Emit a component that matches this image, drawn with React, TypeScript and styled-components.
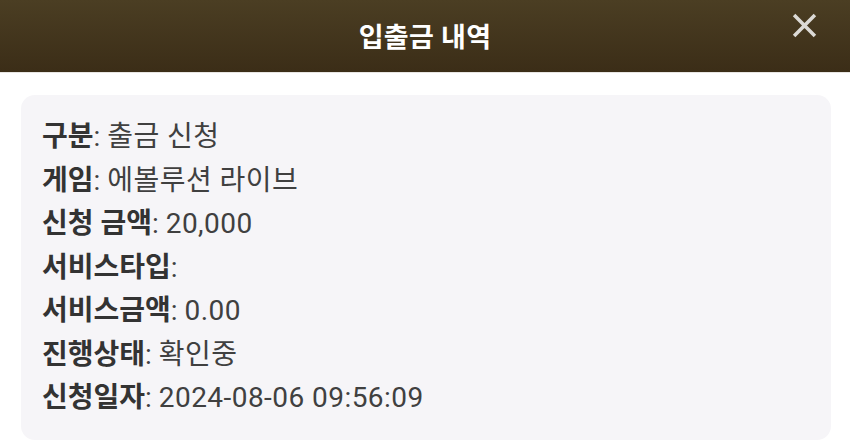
import React from 'react'
import styled, { createGlobalStyle } from 'styled-components'

const GlobalStyle = createGlobalStyle`
  html, body {
    margin: 0;
    padding: 0;
    background: #ffffff;
  }

  body {
    font-family: Roboto, 'Noto Sans CJK KR', sans-serif;
  }
`

const Modal = styled.div`
  width: 850px;
  height: 443px;
  background: #ffffff;
  overflow: hidden;
`

const Header = styled.header`
  position: relative;
  height: 72px;
  display: flex;
  align-items: center;
  justify-content: center;
  background: linear-gradient(180deg, #4b3e23 0%, #3b2d17 100%);
  border-bottom: 1px solid #e8e6e3;
`

const Title = styled.h1`
  margin: 0 0 2px;
  font-size: 27px;
  font-weight: 700;
  color: #ffffff;
  letter-spacing: 0.3px;
`

const CloseButton = styled.button`
  position: absolute;
  top: 11px;
  right: 32px;
  width: 28px;
  height: 28px;
  padding: 0;
  border: 0;
  background: none;
  cursor: pointer;
  display: flex;
  align-items: center;
  justify-content: center;
`

const Body = styled.div`
  padding: 22px 19px 0 21px;
`

const Card = styled.div`
  background: #f6f5f8;
  border-radius: 14px;
  padding: 20px 21px 20px;
`

const Row = styled.div`
  font-size: 28px;
  line-height: 43.5px;
  color: #404040;
  white-space: nowrap;
`

const Label = styled.span`
  font-weight: 700;
  color: #333333;
`

const Value = styled.span`
  letter-spacing: 0.45px;
`

const rows: [string, string][] = [
  ['구분', '출금 신청'],
  ['게임', '에볼루션 라이브'],
  ['신청 금액', '20,000'],
  ['서비스타입', ''],
  ['서비스금액', '0.00'],
  ['진행상태', '확인중'],
  ['신청일자', '2024-08-06 09:56:09'],
]

export default function App() {
  return (
    <>
      <GlobalStyle />
      <Modal>
        <Header>
          <Title>입출금 내역</Title>
          <CloseButton aria-label="닫기">
            <svg width="25" height="25" viewBox="0 0 24 24">
              <path d="M2 2L22 22M22 2L2 22" stroke="#dcdad6" strokeWidth="3.4" strokeLinecap="butt" />
            </svg>
          </CloseButton>
        </Header>
        <Body>
          <Card>
            {rows.map(([label, value]) => (
              <Row key={label}>
                <Label>{label}</Label>: <Value>{value}</Value>
              </Row>
            ))}
          </Card>
        </Body>
      </Modal>
    </>
  )
}
